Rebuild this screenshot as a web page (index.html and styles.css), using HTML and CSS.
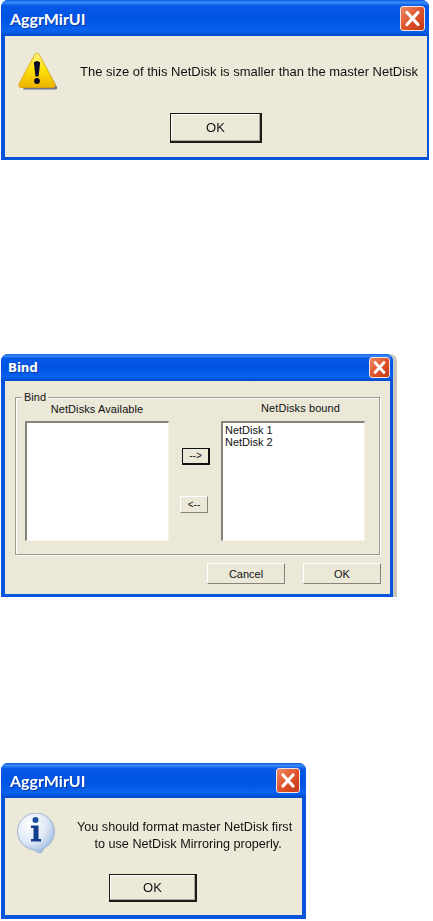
FILE: index.html
```html
<!DOCTYPE html>
<html>
<head>
  <title>AggrMirUI dialogs</title>
  <link rel="stylesheet" href="styles.css">
</head>
<body>
  <!-- size warning -->
  <div class="dialog dialog-warn soft">
    <div class="titlebar">
      <span class="title">AggrMirUI</span>
      <button class="close"><svg viewBox="0 0 25 25" width="25" height="25"><path d="M7 6.500 18 18.500M18 6.500 7 18.500" stroke="#fff" stroke-width="3.200" stroke-linecap="round"/></svg></button>
    </div>
    <div class="client">
      <div class="message">
        <svg class="icon" viewBox="0 0 40 40" width="40" height="40">
          <defs>
            <linearGradient id="warnFill" x1="0" y1="0" x2="0" y2="1">
              <stop offset="0" stop-color="#fff48a"/>
              <stop offset="0.45" stop-color="#fde30c"/>
              <stop offset="1" stop-color="#eeb300"/>
            </linearGradient>
          </defs>
          <path d="M21 4 39 36Q39.500 38.500 37 38.500H5Z" fill="#4a4a78" opacity="0.75"/>
          <path d="M19 2Q20.500 2 21.500 4L37 33Q38 36.500 35 36.500H3Q0 36.500 1 33L16.500 4Q17.500 2 19 2Z" fill="url(#warnFill)" stroke="#d9a400" stroke-width="0.8"/>
          <path d="M15.800 11.500Q19 8.500 22.200 11.500L20.500 25.500H17.500Z" fill="#0c0c28"/>
          <circle cx="19" cy="30" r="2.900" fill="#0c0c28"/>
        </svg>
        <p class="text">The size of this NetDisk is smaller than the master NetDisk</p>
      </div>
      <div class="actions">
        <button class="btn btn-default">OK</button>
      </div>
    </div>
  </div>

  <!-- bind window -->
  <div class="dialog dialog-bind">
    <div class="titlebar">
      <span class="title">Bind</span>
      <button class="close"><svg viewBox="0 0 21 21" width="21" height="21"><path d="M6 5.500 15 15.500M15 5.500 6 15.500" stroke="#fff" stroke-width="2.800" stroke-linecap="round"/></svg></button>
    </div>
    <div class="client">
      <div class="group">
        <span class="legend">Bind</span>
        <div class="column">
          <div class="list-label">NetDisks Available</div>
          <div class="listbox"></div>
        </div>
        <div class="movers">
          <button class="btn-small btn-small-default">--&gt;</button>
          <button class="btn-small btn-small-back">&lt;--</button>
        </div>
        <div class="column">
          <div class="list-label list-label-right">NetDisks bound</div>
          <div class="listbox">
            <div>NetDisk 1</div>
            <div>NetDisk 2</div>
          </div>
        </div>
      </div>
      <div class="bind-actions">
        <button class="btn-flat">Cancel</button>
        <button class="btn-flat">OK</button>
      </div>
    </div>
  </div>

  <!-- format notice -->
  <div class="dialog dialog-info soft">
    <div class="titlebar">
      <span class="title">AggrMirUI</span>
      <button class="close"><svg viewBox="0 0 24 25" width="24" height="25"><path d="M7 7 17 18M17 7 7 18" stroke="#fff" stroke-width="3.200" stroke-linecap="round"/></svg></button>
    </div>
    <div class="client">
      <div class="message">
        <svg class="icon" viewBox="0 0 38 42" width="38" height="42">
          <defs>
            <radialGradient id="infoFill" cx="0.35" cy="0.3" r="0.8">
              <stop offset="0" stop-color="#ffffff"/>
              <stop offset="0.55" stop-color="#dfe9f6"/>
              <stop offset="1" stop-color="#8fb0dc"/>
            </radialGradient>
          </defs>
          <path d="M20 39 17 36.900 A18.500 18.500 0 1 1 27 35.200L24.500 39.500Q22.500 40.500 20 39Z" fill="url(#infoFill)" stroke="#9fb4cf" stroke-width="1"/>
          <circle cx="18.500" cy="7" r="3" fill="#1c4fa0"/>
          <path d="M14 12.500H21.500V26H24V28.500H14V26H16.500V15H14Z" fill="#123f8f"/>
        </svg>
        <p class="text text-center">You should format master NetDisk first<br><span class="nudge">to use NetDisk Mirroring properly.</span></p>
      </div>
      <div class="actions">
        <button class="btn btn-default">OK</button>
      </div>
    </div>
  </div>
</body>
</html>
```

FILE: styles.css
```css
body {
  margin: 0;
  padding: 0;
  background-color: white;
  font-family: "Liberation Sans", Arial, sans-serif;
  color: #111;
}

button {
  font-family: inherit;
  color: inherit;
  padding: 0;
  cursor: pointer;
}

.dialog {
  display: flex;
  flex-direction: column;
  margin-left: 1px;
  background-color: #0855dd;
  border-radius: 7px 7px 0 0;
  box-sizing: border-box;
}

.soft {
  filter: blur(0.35px);
}

.dialog-warn {
  width: 428px;
  height: 160px;
}

.dialog-bind {
  width: 392px;
  height: 243px;
  margin-top: 194px;
  box-shadow: 4px 0 0 #c8c7bf;
}

.dialog-info {
  width: 305px;
  height: 156px;
  margin-top: 166px;
}

/* title bar */
.titlebar {
  display: flex;
  align-items: center;
  justify-content: space-between;
  flex-shrink: 0;
  height: 36px;
  padding: 0 4px 0 9px;
  border-radius: 7px 7px 0 0;
  background: linear-gradient(#0a5be6 0%, #3a8cf6 7%, #0758e6 16%, #0054e3 55%, #0a62ee 85%, #0049c8 100%);
}

.dialog-bind .titlebar {
  height: 27px;
  padding: 0 3px 0 7px;
}

.dialog-info .titlebar {
  height: 35px;
  padding-right: 6px;
}

.title {
  color: white;
  font-family: Lato, sans-serif;
  font-weight: bold;
  font-size: 16px;
  text-shadow: 1px 1px 0 #0a3aa8;
}

.dialog-bind .title {
  font-family: "DejaVu Sans", sans-serif;
  font-size: 12px;
  letter-spacing: -0.2px;
}

.close {
  display: flex;
  border: 1px solid #f3e4dc;
  border-radius: 3px;
  background: linear-gradient(135deg, #ee8a63, #dd5029 55%, #c23a16);
}

.close svg {
  margin: -1px;
}

/* client area */
.client {
  display: flex;
  flex-direction: column;
  flex: 1;
  margin: 0 2px 3px 4px;
  background-color: #ece9d8;
}

.dialog-bind .client {
  margin: 0 3px 3px 4px;
  background-color: #ebe8d8;
}

.dialog-info .client {
  margin: 0 4px 4px 4px;
}

.message {
  display: flex;
  align-items: center;
  height: 77px;
  padding-left: 13px;
}

.dialog-info .message {
  height: 76px;
  padding-left: 12px;
}

.icon {
  flex-shrink: 0;
  margin-top: -8px;
}

.dialog-info .icon {
  margin-top: -4px;
}

.text {
  margin: -6px 0 0 22px;
  font-size: 13px;
  line-height: 17px;
}

.dialog-info .text {
  margin: 0 0 0 22px;
  font-size: 12.65px;
}

.text-center {
  text-align: center;
}

.nudge {
  padding-left: 7px;
}

.actions {
  display: flex;
  justify-content: center;
}

.dialog-info .actions {
  padding-right: 1px;
}

.btn {
  box-sizing: border-box;
  width: 92px;
  height: 30px;
  font-size: 13px;
  background-color: #ece9d8;
}

.btn-default {
  border: 1px solid #1b1b17;
  border-right-width: 2px;
  border-bottom-width: 2px;
  box-shadow: inset -1px -1px 0 #aca899, inset 1px 1px 0 #fff;
}

.dialog-info .btn {
  width: 88px;
  height: 28px;
}

/* bind group */
.group {
  position: relative;
  display: flex;
  box-sizing: border-box;
  width: 365px;
  height: 158px;
  margin: 16px 0 0 10px;
  padding: 0 0 0 9px;
  border: 1px solid #9c9a8c;
  box-shadow: 1px 1px 0 white, inset 1px 1px 0 white;
}

.legend {
  position: absolute;
  top: -7px;
  left: 6px;
  padding: 0 2px;
  background-color: #ebe8d8;
  font-size: 11px;
  line-height: 13px;
}

.column {
  display: flex;
  flex-direction: column;
  width: 144px;
}

.list-label {
  height: 23px;
  font-size: 11px;
  line-height: 22px;
  letter-spacing: 0.1px;
  text-align: center;
}

.list-label-right {
  padding-left: 15px;
  line-height: 20px;
}

.listbox {
  box-sizing: border-box;
  height: 120px;
  padding: 1px 2px;
  background-color: white;
  border: 1px solid #85837a;
  border-top-width: 2px;
  border-left-width: 2px;
  border-right-color: #f4f3ec;
  border-bottom-color: #f4f3ec;
  font-size: 11px;
  line-height: 12px;
}

.movers {
  display: flex;
  flex-direction: column;
  gap: 31px;
  width: 52px;
  padding-top: 50px;
}

.btn-small {
  box-sizing: border-box;
  width: 28px;
  height: 17px;
  font-size: 10px;
  line-height: 12px;
  background-color: #ebe8d8;
}

.btn-small-default {
  margin-left: 13px;
  border: 1px solid #111;
  border-right-width: 2px;
  border-bottom-width: 2px;
}

.btn-small-back {
  margin-left: 11px;
  border: 1px solid #85837a;
  border-top-color: white;
  border-left-color: white;
}

.bind-actions {
  display: flex;
  justify-content: flex-end;
  gap: 18px;
  margin-top: 8px;
  margin-right: 9px;
}

.btn-flat {
  box-sizing: border-box;
  width: 78px;
  height: 21px;
  font-size: 11px;
  background-color: #ebe8d8;
  border: 1px solid #85837a;
  border-top-color: white;
  border-left-color: white;
}
```
